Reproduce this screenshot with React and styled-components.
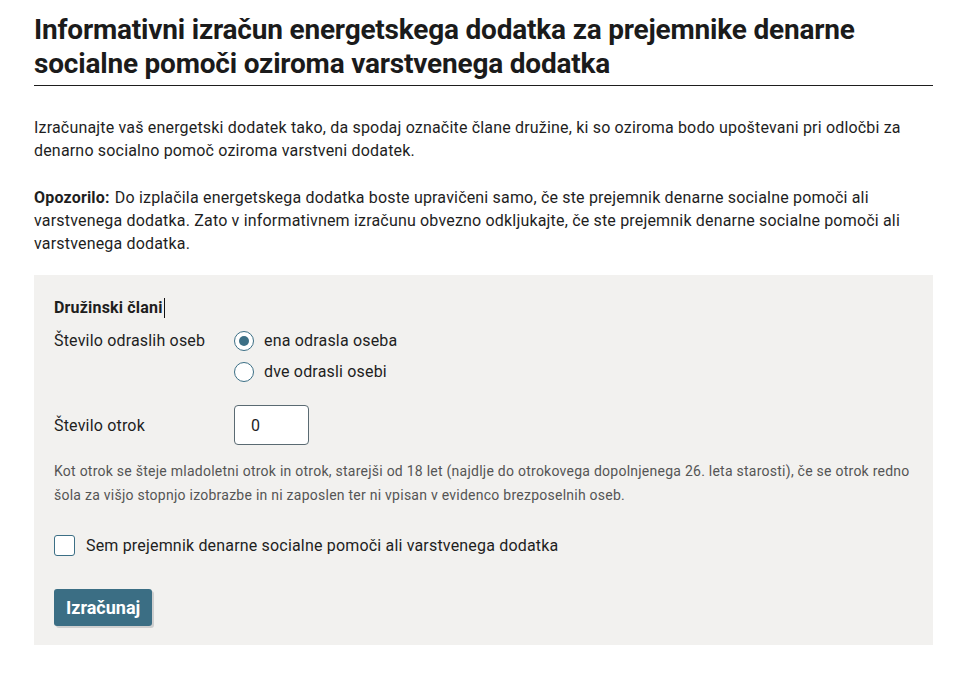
import React, { useState } from 'react';
import styled, { createGlobalStyle } from 'styled-components';

const GlobalStyle = createGlobalStyle`
  body {
    margin: 0;
    background: #fff;
    font-family: 'Roboto', 'Noto Sans', sans-serif;
    color: #1e1e1e;
  }
`;

const App = () => {
  const [adults, setAdults] = useState(1);
  const [children, setChildren] = useState('0');
  const [recipient, setRecipient] = useState(false);

  return (
    <>
      <GlobalStyle />
      <Page>
        <Title>
          Informativni izračun energetskega dodatka za prejemnike denarne socialne pomoči oziroma varstvenega dodatka
        </Title>

        <Intro>
          Izračunajte vaš energetski dodatek tako, da spodaj označite člane družine, ki so oziroma bodo upoštevani pri odločbi za
          denarno socialno pomoč oziroma varstveni dodatek.
        </Intro>

        <Intro $last>
          <Strong>Opozorilo:</Strong> Do izplačila energetskega dodatka boste upravičeni samo, če ste prejemnik denarne socialne pomoči ali
          varstvenega dodatka. Zato v informativnem izračunu obvezno odkljukajte, če ste prejemnik denarne socialne pomoči ali
          varstvenega dodatka.
        </Intro>

        <Panel>
          <SectionTitle>
            Družinski člani<Caret />
          </SectionTitle>

          <FieldRow $gap={22}>
            <FieldLabel>Število odraslih oseb</FieldLabel>
            <RadioGroup>
              <RadioOption onClick={() => setAdults(1)}>
                <RadioCircle $checked={adults === 1} />
                ena odrasla oseba
              </RadioOption>
              <RadioOption onClick={() => setAdults(2)}>
                <RadioCircle $checked={adults === 2} />
                dve odrasli osebi
              </RadioOption>
            </RadioGroup>
          </FieldRow>

          <FieldRow $center $gap={14}>
            <FieldLabel>Število otrok</FieldLabel>
            <NumberInput value={children} onChange={(e) => setChildren(e.target.value)} />
          </FieldRow>

          <Hint>
            Kot otrok se šteje mladoletni otrok in otrok, starejši od 18 let (najdlje do otrokovega dopolnjenega 26. leta starosti), če se otrok redno
            šola za višjo stopnjo izobrazbe in ni zaposlen ter ni vpisan v evidenco brezposelnih oseb.
          </Hint>

          <CheckRow onClick={() => setRecipient(!recipient)}>
            <CheckBox $checked={recipient}>{recipient ? '✓' : ''}</CheckBox>
            Sem prejemnik denarne socialne pomoči ali varstvenega dodatka
          </CheckRow>

          <SubmitButton type="button">Izračunaj</SubmitButton>
        </Panel>
      </Page>
    </>
  );
};

const Page = styled.div`
  width: 899px;
  padding: 13px 0 0 34px;
`;

const Title = styled.h1`
  margin: 0 0 30px;
  padding-bottom: 4px;
  border-bottom: 1px solid #1e1e1e;
  font-size: 28px;
  line-height: 34px;
  font-weight: 700;
  letter-spacing: -0.2px;
  color: #1b1b1b;
`;

const Intro = styled.p`
  margin: 0 0 ${({ $last }) => ($last ? '20px' : '24px')};
  font-size: 16px;
  line-height: 23px;
  letter-spacing: 0.18px;
`;

const Strong = styled.strong`
  font-weight: 700;
  margin-right: 1px;
`;

const Panel = styled.div`
  background: #f2f1ef;
  padding: 22px 20px 19px;
  letter-spacing: 0.18px;
`;

const SectionTitle = styled.div`
  display: flex;
  align-items: center;
  font-size: 16px;
  font-weight: 700;
  line-height: 22px;
  margin-bottom: 10px;
`;

const Caret = styled.span`
  display: inline-block;
  width: 1px;
  height: 20px;
  background: #111;
  margin-left: 1px;
`;

const FieldRow = styled.div`
  display: flex;
  align-items: ${({ $center }) => ($center ? 'center' : 'flex-start')};
  margin-bottom: ${({ $gap }) => $gap}px;
`;

const FieldLabel = styled.div`
  width: 180px;
  font-size: 16px;
  line-height: 23px;
`;

const RadioGroup = styled.div`
  display: flex;
  flex-direction: column;
  gap: 8px;
`;

const RadioOption = styled.label`
  display: flex;
  align-items: center;
  gap: 10px;
  font-size: 16px;
  line-height: 23px;
  cursor: pointer;
`;

const RadioCircle = styled.span`
  box-sizing: border-box;
  width: 20px;
  height: 20px;
  border-radius: 50%;
  border: 1.5px solid #3c6f85;
  background: #fff;
  display: flex;
  align-items: center;
  justify-content: center;

  &::after {
    content: '';
    width: 10px;
    height: 10px;
    border-radius: 50%;
    background: #3c6f85;
    display: ${({ $checked }) => ($checked ? 'block' : 'none')};
  }
`;

const NumberInput = styled.input`
  box-sizing: border-box;
  width: 75px;
  height: 40px;
  border: 1px solid #5a6a72;
  border-radius: 4px;
  padding: 0 16px;
  font-family: inherit;
  font-size: 16px;
  color: #1e1e1e;
  background: #fff;
`;

const Hint = styled.p`
  margin: 0 0 27px;
  font-size: 14px;
  line-height: 24px;
  letter-spacing: 0.25px;
  color: #555;
`;

const CheckRow = styled.label`
  display: flex;
  align-items: center;
  gap: 11px;
  font-size: 16px;
  line-height: 23px;
  cursor: pointer;
  margin-bottom: 32px;
`;

const CheckBox = styled.span`
  box-sizing: border-box;
  width: 21px;
  height: 21px;
  border: 1.5px solid #3c6f85;
  border-radius: 3px;
  background: ${({ $checked }) => ($checked ? '#3c6f85' : '#fff')};
  color: #fff;
  font-size: 14px;
  display: flex;
  align-items: center;
  justify-content: center;
`;

const SubmitButton = styled.button`
  display: block;
  height: 37px;
  padding: 0 12px;
  border: none;
  border-radius: 3px;
  background: #3b6e84;
  color: #fff;
  font-family: inherit;
  font-size: 18px;
  font-weight: 700;
  letter-spacing: 0;
  box-shadow: 2px 2px 0 #cfcfcf;
  cursor: pointer;
`;

export default App;
